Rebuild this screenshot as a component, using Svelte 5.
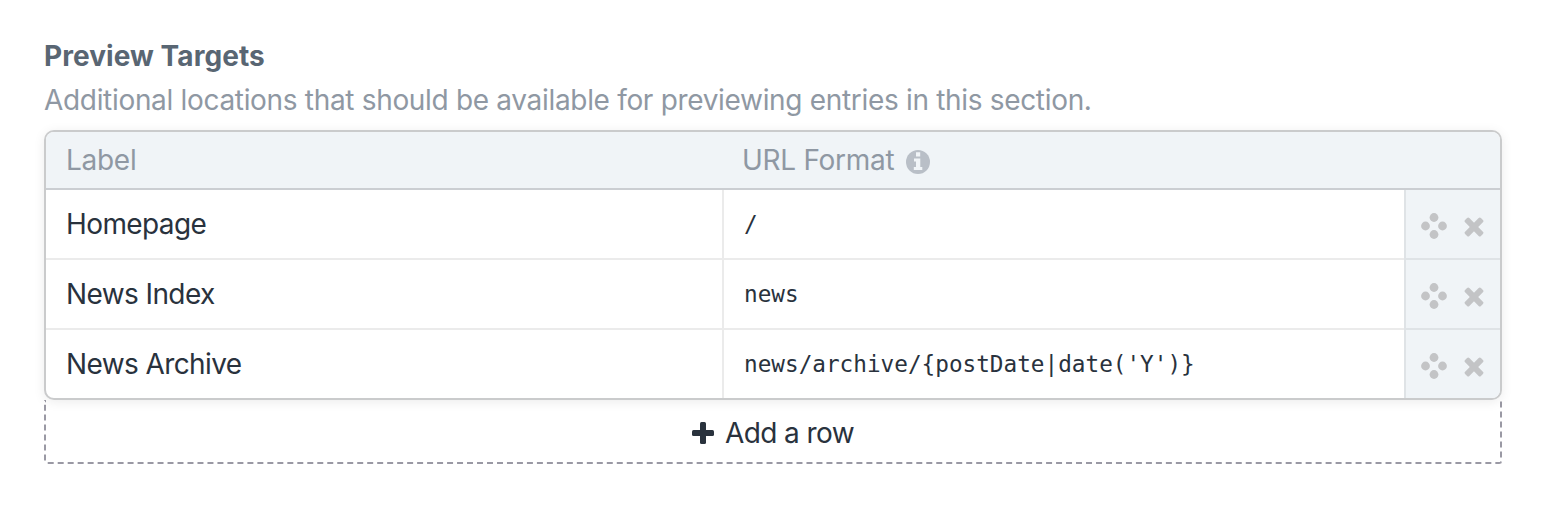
<script>
  const rows = [
    { label: 'Homepage', url: '/' },
    { label: 'News Index', url: 'news' },
    { label: 'News Archive', url: "news/archive/{postDate|date('Y')}" }
  ];
</script>

<section class="field">
  <h2><span>Preview Targets</span></h2>
  <p><span>Additional locations that should be available for previewing entries in this section.</span></p>
  <div class="table">
    <div class="head">
      <div class="hl"><span>Label</span></div>
      <div class="hu">
        <span>URL Format</span>
        <svg class="info" viewBox="0 0 24 24" width="24" height="24"><circle cx="12" cy="12" r="12" fill="#b9bfc7"/><path fill="#f1f5f8" d="M10 2.3h4.2v4.3H10zM8 8.6h6.3V17h2v3H7.8v-3H10v-5.5H8z"/></svg>
      </div>
    </div>
    {#each rows as row}
      <div class="row">
        <div class="label"><span>{row.label}</span></div>
        <div class="url"><span>{row.url}</span></div>
        <div class="actions">
          <svg viewBox="0 0 26 26" width="26" height="26" fill="#c3c4c6"><circle cx="13" cy="4.5" r="4.4"/><circle cx="4.5" cy="13" r="4.4"/><circle cx="21.5" cy="13" r="4.4"/><circle cx="13" cy="21.5" r="4.4"/></svg>
          <svg class="remove" viewBox="0 0 20 20" width="20" height="20" fill="#c3c4c6"><g transform="rotate(45 10 10)"><rect x="-1.2" y="7" width="22.4" height="6" rx="1.6"/><rect x="7" y="-1.2" width="6" height="22.4" rx="1.6"/></g></svg>
        </div>
      </div>
    {/each}
  </div>
  <button><svg viewBox="0 0 22 22" width="22" height="22" fill="#29323d"><rect x="8" width="6" height="22" rx="1.5"/><rect y="8" width="22" height="6" rx="1.5"/></svg><span>Add a row</span></button>
</section>

<style>
  :global(body) { margin: 0; background: #fff; }
  .field { box-sizing: border-box; width: 1550px; height: 516px; padding: 36px 48px 0 44px; font: 28px/40px Inter, sans-serif; color: #29323d; }
  h2 { margin: 0; font-size: 28px; font-weight: 700; line-height: 40px; letter-spacing: 0.06px; color: #596673; }
  p { margin: 4px 0 10px; line-height: 40px; letter-spacing: -0.32px; color: #8f98a3; }
  span { white-space: pre; }
  .table { position: relative; box-sizing: border-box; height: 270px; border: 2px solid #cacbcc; border-radius: 10px; overflow: hidden; box-shadow: 0 2px 12px #00000014; background: #fff; }
  .head { display: flex; height: 56px; background: #f0f4f7; border-bottom: 2px solid #cbced2; color: #8f98a3; line-height: 57px; letter-spacing: -0.28px; }
  .hl { width: 676px; padding-left: 20px; box-sizing: border-box; }
  .hu { display: flex; align-items: center; gap: 12px; padding-left: 20px; }
  .info { margin-top: 4px; }
  .row { display: flex; height: 68px; border-bottom: 2px solid #ebebeb; line-height: 69px; }
  .row:last-child { border: 0; }
  .label { width: 676px; box-sizing: border-box; padding-left: 20px; letter-spacing: -0.6px; }
  .url { width: 682px; box-sizing: border-box; padding-left: 20px; border-left: 2px solid #ebebeb; font: 22.7px/68px "DejaVu Sans Mono", monospace; }
  .actions { flex: 1; display: flex; align-items: center; gap: 17px; padding: 4px 0 0 15px; box-sizing: border-box; border-left: 2px solid #dfe3e6; background: #f0f4f7; }
  .row:not(:last-child) .actions { height: 70px; border-bottom: 2px solid #dfe3e6; }
  .remove { margin-top: 1px; }
  button { display: flex; align-items: center; justify-content: center; gap: 11px; box-sizing: border-box; width: 100%; height: 64px; padding: 3px 0 0; border: 2px dashed #9a99a4; border-top: 0; border-radius: 0 0 3px 3px; background: none; font: 28px/40px Inter, sans-serif; letter-spacing: -0.6px; color: #29323d; }
</style>
